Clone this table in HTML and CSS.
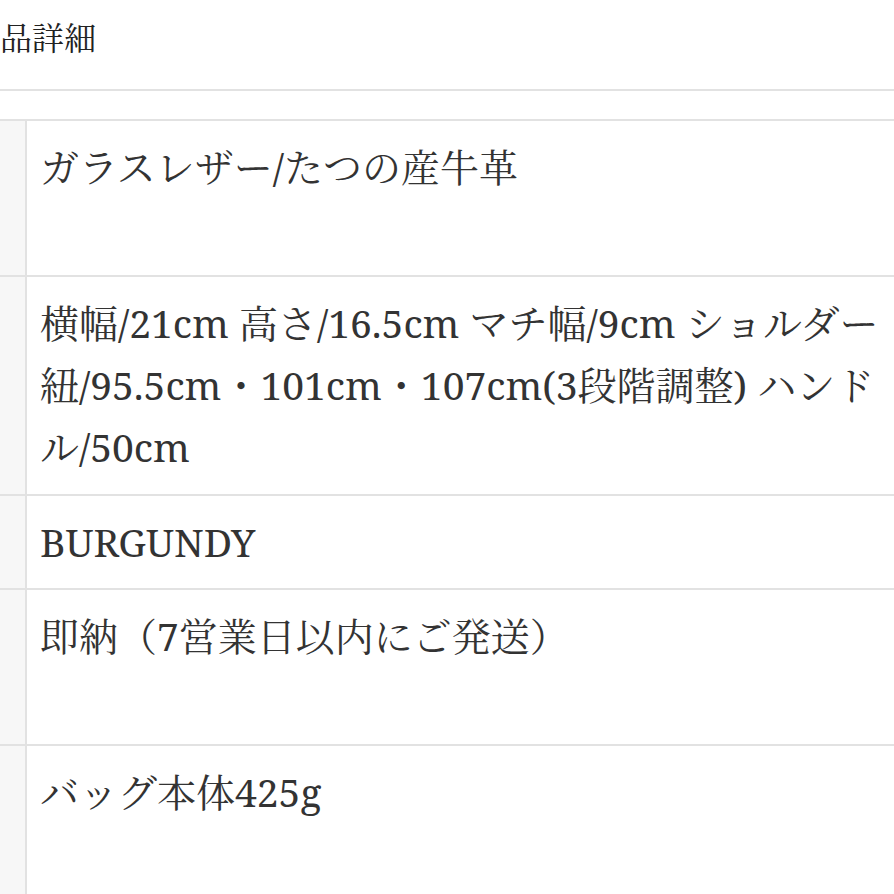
FILE: index.html
```html
<!DOCTYPE html>
<html lang="ja">
<head>
<meta charset="utf-8">
<title>商品詳細</title>
<link rel="stylesheet" href="styles.css">
</head>
<body>
<div class="wrap">
  <h2 class="title">商品詳細</h2>
  <table class="spec">
    <tr class="tall"><th>素材</th><td>ガラスレザー/たつの産牛革</td></tr>
    <tr class="mid"><th>サイズ</th><td>横幅/21cm 高さ/16.5cm マチ幅/9cm ショルダー紐/95.5cm・101cm・107cm(3段階調整) ハンドル/50cm</td></tr>
    <tr><th>カラー</th><td>BURGUNDY</td></tr>
    <tr class="tall"><th>納期</th><td>即納（7営業日以内にご発送）</td></tr>
    <tr class="tall"><th>重量</th><td>バッグ本体425g</td></tr>
  </table>
</div>
</body>
</html>
```
FILE: styles.css
```css
html, body {
  margin: 0;
  padding: 0;
  background: #fff;
  overflow: hidden;
}
body {
  font-family: "Noto Serif", "Liberation Serif", "Noto Serif CJK JP", "Noto Sans CJK JP", serif;
  color: #333;
}
.wrap {
  margin-left: -140px;
  width: 1060px;
}
.title {
  margin: 0;
  padding: 14px 0 27px 108px;
  font-size: 32px;
  line-height: 48px;
  font-weight: normal;
  color: #222;
  border-bottom: 2px solid #e2e2e2;
}
.spec {
  margin-top: 28px;
  width: 100%;
  border-collapse: collapse;
  font-size: 39px;
  line-height: 62px;
}
.spec th, .spec td {
  border: 2px solid #e2e2e2;
  vertical-align: top;
  text-align: left;
  padding: 15px 15px 15px 13px;
  font-weight: normal;
}
.spec th {
  width: 135px;
  background: #f7f7f7;
}
.spec tr.tall td {
  height: 124px;
}
.spec tr.mid td {
  padding-bottom: 16px;
}
```
